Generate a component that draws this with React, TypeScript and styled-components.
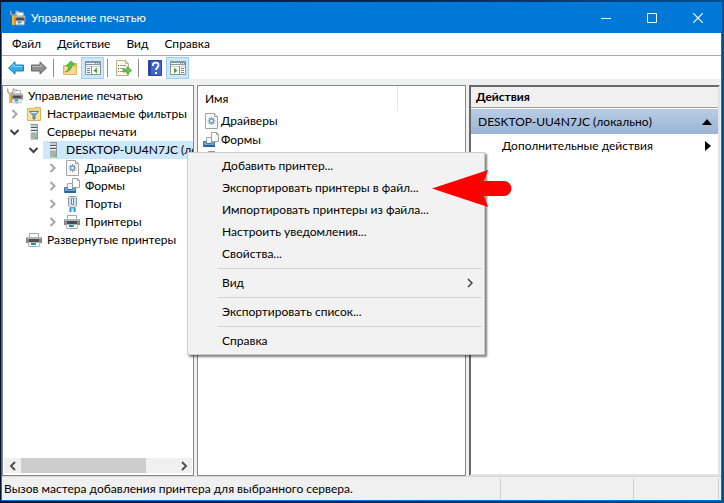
import React from "react";
import styled, { createGlobalStyle, css } from "styled-components";

const GlobalStyle = createGlobalStyle`
  *, *::before, *::after { box-sizing: border-box; }
  body {
    margin: 0;
    background: linear-gradient(90deg, #03152f 0%, #04295c 60%, #044f8f 100%);
    color: #000;
    font: 12px/18px Lato, "Noto Sans", sans-serif;
  }
  button { font: inherit; color: inherit; border: 0; padding: 0; background: none; }
  ul { list-style: none; margin: 0; padding: 0; }
  svg { display: block; flex: none; }
`;

const Desktop = styled.div`
  display: flex;
  min-height: 100vh;
  padding: 2px 2px 2px 1px;
`;

const AppWindow = styled.main`
  position: relative;
  display: flex;
  flex: 1;
  flex-direction: column;
  min-width: 0;
  border: 1px solid #0078d7;
  background: #f0f0f0;
`;

const TitleBar = styled.header`
  display: flex;
  align-items: center;
  height: 30px;
  padding-left: 8px;
  gap: 5px;
  background: #0078d7;
  color: #fff;
`;

const Title = styled.h1`
  flex: 1;
  margin: 0;
  font-size: 12px;
  font-weight: 400;
`;

const CaptionButton = styled.button`
  display: flex;
  align-items: center;
  justify-content: center;
  width: 46px;
  height: 30px;
`;

const CaptionButtons = styled.div`
  display: flex;
`;

const MenuBar = styled.nav`
  display: flex;
  height: 23px;
  padding-left: 2px;
  border-bottom: 1px solid #a7abb0;
  background: #fff;
`;

const MenuButton = styled.button`
  padding: 0 8px;
`;

const Toolbar = styled.div`
  display: flex;
  align-items: center;
  height: 23px;
  padding-left: 2px;
  background: #fff;
`;

const ToolButton = styled.button<{ $active?: boolean }>`
  display: flex;
  align-items: center;
  justify-content: center;
  width: 23px;
  height: 22px;
  ${(p) => p.$active && css`
    border: 1px solid #99d1ff;
    background: #cce8ff;
  `}
`;

const ToolDivider = styled.span`
  width: 1px;
  height: 18px;
  margin: 0 4px 0 3px;
  background: #8a8a8a;
`;

const Panels = styled.div`
  display: grid;
  flex: 1;
  grid-template-columns: minmax(0, 192fr) minmax(0, 269fr) minmax(0, 251fr);
  gap: 3px;
  padding: 6px 1px 0 0;
`;

const Panel = styled.section`
  display: flex;
  flex-direction: column;
  min-width: 0;
  border: 1px solid #828790;
  background: #fff;
`;

const ActionsPanel = styled(Panel)`
  border: 2px solid;
  border-color: #696969 #e3e3e3 #e3e3e3 #696969;
`;

const Tree = styled.ul`
  flex: 1;
  padding-top: 1px;
  overflow: hidden;
`;

const TreeRow = styled.li<{ $level: number; $expandable: boolean }>`
  display: flex;
  align-items: center;
  height: 18px;
  padding-left: ${(p) => 2 + 19 * p.$level - (p.$expandable ? 17 : 0)}px;
  white-space: nowrap;
`;

const Expander = styled.button`
  display: flex;
  flex: none;
  align-items: center;
  width: 17px;
  height: 18px;
`;

const TreeLabel = styled.span<{ $selected?: boolean }>`
  display: flex;
  flex: 1;
  align-items: center;
  gap: 5px;
  min-width: 0;
  height: 18px;
  padding-left: 2px;
  overflow: hidden;
  background: ${(p) => (p.$selected ? "#cce8ff" : "transparent")};
`;

const ScrollBar = styled.div`
  display: grid;
  grid-template-columns: 17px 1fr 17px;
  align-items: center;
  height: 15px;
  margin: 0 1px 2px;
  background: #f0f0f0;
`;

const ScrollButton = styled.button`
  display: flex;
  justify-content: center;
`;

const ScrollThumb = styled.div`
  width: 81%;
  height: 15px;
  background: #cdcdcd;
`;

const ColumnHeader = styled.div`
  width: 75%;
  height: 25px;
  padding: 4px 7px;
  border-right: 1px solid #e5e5e5;
`;

const NodeList = styled.ul`
  padding: 0 5px;
`;

const NodeRow = styled.li`
  display: flex;
  align-items: center;
  gap: 2px;
  height: 19px;
`;

const ActionsTitle = styled.h2`
  height: 21px;
  margin: 0;
  padding: 1px 5px;
  border-bottom: 1px solid #a0a0a0;
  background: #f0f0f0;
  font-size: 12px;
  font-weight: 700;
`;

const ActionsGroup = styled.button`
  display: flex;
  align-items: center;
  justify-content: space-between;
  height: 26px;
  padding: 0 6px 0 7px;
  border-top: 1px solid #fff;
  background: linear-gradient(#b9cde5, #98b4d5);
`;

const ActionRow = styled.button`
  display: flex;
  align-items: center;
  justify-content: space-between;
  height: 24px;
  padding: 0 6px 0 31px;
`;

const StatusBar = styled.footer`
  display: grid;
  grid-template-columns: minmax(0, 499fr) minmax(0, 133fr) minmax(0, 85fr);
  height: 24px;
  padding: 1px 2px 1px 0;
  border-top: 1px solid #d7d7d7;
`;

const StatusCell = styled.div`
  padding: 2px;
  border-right: 1px solid #d0d0d0;
  white-space: nowrap;
`;

const ContextMenu = styled.div`
  position: absolute;
  top: 149px;
  left: 185px;
  width: 298px;
  padding: 2px;
  border: 1px solid #cccccc;
  background: #f2f2f2;
  box-shadow: 2px 2px 2px rgba(0, 0, 0, 0.5);
`;

const ContextItem = styled.button`
  display: flex;
  align-items: center;
  justify-content: space-between;
  width: 100%;
  height: 22px;
  padding: 0 9px 0 32px;
`;

const ContextSeparator = styled.hr`
  height: 1px;
  margin: 3px 0 3px 28px;
  border: 0;
  background: #d2d2d2;
`;

const Pointer = styled.svg`
  position: absolute;
  top: 166px;
  left: 430px;
`;

type Kind = "console" | "filter" | "server" | "driver" | "form" | "port" | "printer";

const PrinterShape = () => (
  <>
    <path d="M3.5 1.5h9v4h-9z" fill="#fff" stroke="#a5a5a5" />
    <path d="M1 5h14l1 1v5H0V6z" fill="#85888a" />
    <path d="M1 5h14v2H1z" fill="#b3b6b8" />
    <path d="M3 7h10v3H3z" fill="#4a4d4f" />
    <path d="M2.500 10.500h11v4h-11z" fill="#f6f8f9" stroke="#b5b8ba" />
    <path d="M5 11h3v2H5z" fill="#2a7fc0" />
    <path d="M8 11h2v2H8z" fill="#3fa37a" />
    <path d="M6 14h4v1H6z" fill="#5bb0e0" />
  </>
);

function NodeIcon({ kind }: { kind: Kind }) {
  return (
    <svg width="16" height="16" viewBox="0 0 16 16" aria-hidden="true">
      {kind === "printer" && <PrinterShape />}
      {kind === "console" && (
        <>
          <g transform="translate(4 1) scale(.75 .95)"><PrinterShape /></g>
          <path d="M.7.500v3l1.800 2h2l1.800-2V.5" fill="none" stroke="#a4a8aa" strokeWidth="1.500" />
          <path d="M2 5.500h3V15H2z" fill="#e09a1c" />
          <path d="M2.500 6h1v9h-1z" fill="#ffd567" />
          <path d="M5 4l2.500-3L10 2 6 5.500z" fill="#e2e4e5" stroke="#8c8f91" strokeWidth=".6" />
        </>
      )}
      {kind === "filter" && (
        <>
          <path d="M1.500 2.500h6l1-1h6v13h-13z" fill="#f3d283" stroke="#d9b45c" />
          <path d="M2 5h12v9H2z" fill="#fbe3a2" />
          <path d="M3.500 5.500h9L9 9.500V13H7V9.500z" fill="#7fa9cb" stroke="#557f9f" />
          <path d="M5 6.500h6" stroke="#dceefb" />
        </>
      )}
      {kind === "server" && (
        <>
          <path d="M4 1l1-1h7v15l-1 1H4z" fill="#8f979b" />
          <path d="M4 1h7v15H4z" fill="#c9ced1" />
          <path d="M4 1h1v15H4z" fill="#e4e7e9" />
          <path d="M5 3.500h6M5 6.500h6" stroke="#50585d" />
          <path d="M5 4.500h6M5 7.500h6" stroke="#f1f3f4" />
          <path d="M5 9h6v6H5z" fill="#a9afb3" />
          <path d="M9 13h2v2H9z" fill="#4be02c" />
        </>
      )}
      {kind === "driver" && (
        <>
          <path d="M2.500.5h9l3 3v12h-12z" fill="#fafafa" stroke="#a3a3a3" />
          <path d="M11.500.5v3h3" fill="#e5e5e5" stroke="#a3a3a3" />
          <path d="M8.500 4v8M4.500 8h8M5.700 5.200l5.600 5.600M11.300 5.200l-5.600 5.600" stroke="#7ba3c2" strokeWidth="1.200" />
          <circle cx="8.5" cy="8" r="2" fill="#fff" stroke="#6f9dc0" strokeWidth="1.400" />
        </>
      )}
      {kind === "form" && (
        <>
          <path d="M3.500 5.500h6v6h-6z" fill="#f2f5f7" stroke="#a0a8ae" />
          <path d="M.5 9.500h2.500l1 2h4l1-2h2.500v5H.5z" fill="#6ea6d3" stroke="#3c78ad" />
          <path d="M1 13h11v2H1z" fill="#2a649b" />
          <path d="M8.500.5h5l2 2v7h-7z" fill="#fff" stroke="#a0a0a0" />
          <path d="M13.500.5v2h2" fill="none" stroke="#a0a0a0" />
        </>
      )}
      {kind === "port" && (
        <>
          <path d="M4.500 1.500l1-1h6l1 1v8l-1.500 2H6l-1.500-2z" fill="#d3e0ea" stroke="#8199aa" />
          <path d="M7.500 2.500h2v6h-2z" fill="#f4f9fc" stroke="#6d8ba2" />
          <path d="M6.500 12v4M10.500 12v4" stroke="#1795d8" strokeWidth="2" />
          <path d="M8.500 12v2" stroke="#9ad2ee" />
        </>
      )}
    </svg>
  );
}

function Chevron({ open }: { open?: boolean }) {
  return (
    <svg width="14" height="10" viewBox="0 0 14 10" fill="none" strokeWidth="2" aria-hidden="true">
      {open ? <path d="M3.500 3l4 4 4-4" stroke="#404040" /> : <path d="M5.500 1l4 4-4 4" stroke="#a6a6a6" />}
    </svg>
  );
}

function ScrollArrow({ back }: { back?: boolean }) {
  return (
    <svg width="8" height="10" viewBox="0 0 8 10" fill="none" stroke="#505050" strokeWidth="2" aria-hidden="true">
      <path d={back ? "M6 1L2 5l4 4" : "M2 1l4 4-4 4"} />
    </svg>
  );
}

function ArrowIcon({ forward }: { forward?: boolean }) {
  return (
    <svg width="16" height="14" viewBox="0 0 16 14" aria-hidden="true">
      {forward ? (
        <>
          <path d="M15.500 7L9 .8V4H.5v6H9v3.200z" fill="#8f8f8f" stroke="#686868" />
          <path d="M1.500 5.500H10V3.500" fill="none" stroke="#bdbdbd" />
        </>
      ) : (
        <>
          <path d="M.5 7L7 .8V4h8.500v6H7v3.200z" fill="#35abe8" stroke="#1d7cba" />
          <path d="M2.500 6.500L6 3.200V5.500h8.500" fill="none" stroke="#8bd8fa" />
        </>
      )}
    </svg>
  );
}

function PaneIcon({ right }: { right?: boolean }) {
  return (
    <svg width="16" height="14" viewBox="0 0 16 14" aria-hidden="true">
      <path d="M.5.5h15v13H.5z" fill="#fff" stroke="#86919a" />
      <path d="M1 1h14v3H1z" fill="#8996a0" />
      <path d="M1 2.500h9M11 2.500h1M13 2.500h1" stroke="#f0f4f7" />
      <path d="M1 5h14v1H1z" fill="#c9d0d6" />
      {right ? (
        <>
          <path d="M9.500 5v8" stroke="#86919a" />
          <path d="M11 7.500h3M11 9.500h3M11 11.500h3" stroke="#77838c" />
          <path d="M4 6.500L7.500 9.500 4 12.500z" fill="#3fb026" />
        </>
      ) : (
        <>
          <path d="M6.500 5v8" stroke="#86919a" />
          <path d="M2 7.500h3M2 9.500h3M2 11.500h3" stroke="#5484ad" />
          <path d="M12 6.500L8.500 9.500l3.500 3z" fill="#3fb026" />
        </>
      )}
    </svg>
  );
}

function FolderUpIcon() {
  return (
    <svg width="16" height="16" viewBox="0 0 16 16" aria-hidden="true">
      <path d="M1.500 5.500h7l1-2h5v11h-13z" fill="#f0c66a" stroke="#dbb35a" />
      <path d="M2 7h12v7H2z" fill="#f8da90" />
      <path d="M3 12c3-1 3.500-3 3.500-6H4L9 1l4 3.500-3 1C9.500 9 7 12 3 12z" fill="#56c03f" stroke="#3a9a30" strokeWidth=".6" />
    </svg>
  );
}

function ExportIcon() {
  return (
    <svg width="16" height="16" viewBox="0 0 16 16" aria-hidden="true">
      <path d="M.5.5h9l3 3v12H.5z" fill="#fffbe3" stroke="#b8b294" />
      <path d="M9.500.5v3h3" fill="none" stroke="#b8b294" />
      <path d="M2 5.500h1M2 8.500h1M2 11.500h1" stroke="#555" />
      <path d="M4 5.500h6M4 8.500h4M4 11.500h3" stroke="#9b9b9b" />
      <path d="M7 9h4V6.500l4.700 4L11 14.500V12H7z" fill="#5fc846" stroke="#3a9a30" strokeWidth=".6" />
    </svg>
  );
}

function HelpIcon() {
  return (
    <svg width="14" height="16" viewBox="0 0 14 16" aria-hidden="true">
      <path d="M.5.5h13v15H.5z" fill="#4166cc" stroke="#27459f" />
      <path d="M1 1h2v14H1z" fill="#27459f" />
      <path d="M5 6V4.500C5 2 10.500 2 10.500 5S8 7.500 8 10" fill="none" stroke="#fff" strokeWidth="1.800" />
      <path d="M7 12h2v2H7z" fill="#fff" />
    </svg>
  );
}

const treeNodes: { label: string; kind: Kind; level: number; open?: boolean; selected?: boolean }[] = [
  { label: "Управление печатью", kind: "console", level: 0 },
  { label: "Настраиваемые фильтры", kind: "filter", level: 1, open: false },
  { label: "Серверы печати", kind: "server", level: 1, open: true },
  { label: "DESKTOP-UU4N7JC (локально)", kind: "server", level: 2, open: true, selected: true },
  { label: "Драйверы", kind: "driver", level: 3, open: false },
  { label: "Формы", kind: "form", level: 3, open: false },
  { label: "Порты", kind: "port", level: 3, open: false },
  { label: "Принтеры", kind: "printer", level: 3, open: false },
  { label: "Развернутые принтеры", kind: "printer", level: 1 },
];

const listNodes: { label?: string; kind: Kind }[] = [
  { label: "Драйверы", kind: "driver" },
  { label: "Формы", kind: "form" },
  { kind: "port" },
];

const commands = [
  "Добавить принтер...",
  "Экспортировать принтеры в файл...",
  "Импортировать принтеры из файла...",
  "Настроить уведомления...",
  "Свойства...",
];

export default function App() {
  return (
    <Desktop>
      <GlobalStyle />
      <AppWindow>
        <TitleBar>
          <NodeIcon kind="console" />
          <Title>Управление печатью</Title>
          <CaptionButtons>
            <CaptionButton aria-label="Свернуть">
              <svg width="10" height="10"><path d="M0 5.500h10" stroke="#fff" /></svg>
            </CaptionButton>
            <CaptionButton aria-label="Развернуть">
              <svg width="10" height="10"><path d="M.5.5h9v9h-9z" fill="none" stroke="#fff" /></svg>
            </CaptionButton>
            <CaptionButton aria-label="Закрыть">
              <svg width="10" height="10"><path d="M0 0l10 10M10 0L0 10" stroke="#fff" strokeWidth="1.200" /></svg>
            </CaptionButton>
          </CaptionButtons>
        </TitleBar>
        <MenuBar>
          {["Файл", "Действие", "Вид", "Справка"].map((m) => <MenuButton key={m}>{m}</MenuButton>)}
        </MenuBar>
        <Toolbar role="toolbar" aria-label="Панель инструментов">
          <ToolButton aria-label="Назад"><ArrowIcon /></ToolButton>
          <ToolButton aria-label="Вперед"><ArrowIcon forward /></ToolButton>
          <ToolDivider />
          <ToolButton aria-label="Вверх"><FolderUpIcon /></ToolButton>
          <ToolButton $active aria-label="Дерево консоли"><PaneIcon /></ToolButton>
          <ToolDivider />
          <ToolButton aria-label="Экспорт"><ExportIcon /></ToolButton>
          <ToolDivider />
          <ToolButton aria-label="Справка по консоли"><HelpIcon /></ToolButton>
          <ToolButton $active aria-label="Панель действий"><PaneIcon right /></ToolButton>
        </Toolbar>
        <Panels>
          <Panel>
            <Tree role="tree">
              {treeNodes.map((n) => (
                <TreeRow key={n.label} role="treeitem" $level={n.level} $expandable={n.open !== undefined}>
                  {n.open !== undefined && <Expander aria-label={n.label}><Chevron open={n.open} /></Expander>}
                  <TreeLabel $selected={n.selected}><NodeIcon kind={n.kind} />{n.label}</TreeLabel>
                </TreeRow>
              ))}
            </Tree>
            <ScrollBar>
              <ScrollButton aria-label="Прокрутить влево"><ScrollArrow back /></ScrollButton>
              <ScrollThumb />
              <ScrollButton aria-label="Прокрутить вправо"><ScrollArrow /></ScrollButton>
            </ScrollBar>
          </Panel>
          <Panel>
            <ColumnHeader>Имя</ColumnHeader>
            <NodeList>
              {listNodes.map((n) => <NodeRow key={n.kind}><NodeIcon kind={n.kind} />{n.label}</NodeRow>)}
            </NodeList>
          </Panel>
          <ActionsPanel>
            <ActionsTitle>Действия</ActionsTitle>
            <ActionsGroup>
              DESKTOP-UU4N7JC (локально)
              <svg width="10" height="6" aria-hidden="true"><path d="M5 0l5 6H0z" /></svg>
            </ActionsGroup>
            <ActionRow>
              Дополнительные действия
              <svg width="8" height="10" aria-hidden="true"><path d="M1 0l6 5-6 5z" /></svg>
            </ActionRow>
          </ActionsPanel>
        </Panels>
        <StatusBar>
          <StatusCell>Вызов мастера добавления принтера для выбранного сервера.</StatusCell>
          <StatusCell />
          <StatusCell />
        </StatusBar>
        <ContextMenu role="menu">
          {commands.map((c) => <ContextItem key={c} role="menuitem">{c}</ContextItem>)}
          <ContextSeparator />
          <ContextItem role="menuitem">
            Вид
            <svg width="6" height="10" fill="none" stroke="#404040" strokeWidth="1.500" aria-hidden="true"><path d="M1 1l4 4-4 4" /></svg>
          </ContextItem>
          <ContextSeparator />
          <ContextItem role="menuitem">Экспортировать список...</ContextItem>
          <ContextSeparator />
          <ContextItem role="menuitem">Справка</ContextItem>
        </ContextMenu>
        <Pointer width="80" height="40" viewBox="0 0 80 40" aria-hidden="true">
          <path d="M0 19.500L56 1l-4 11h20a7.500 7.500 0 0 1 0 15H52l4 11z" fill="#f00" />
        </Pointer>
      </AppWindow>
    </Desktop>
  );
}
